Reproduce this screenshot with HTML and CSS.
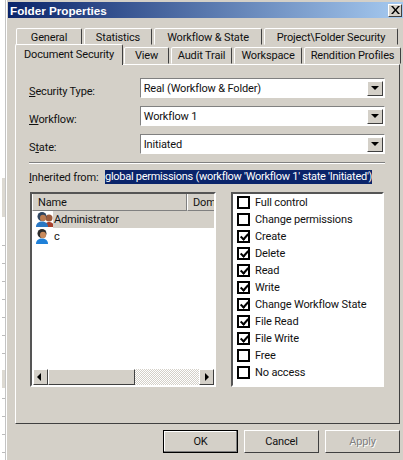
FILE: index.html
```html
<!DOCTYPE html>
<html lang="en">
<head>
  <meta charset="UTF-8">
  <title>Folder Properties</title>
  <link rel="stylesheet" href="styles.css">
</head>
<body>

  <div class="edge">
    <div class="edge-top"></div>
    <div class="edge-ticks"></div>
    <div class="edge-block"></div>
    <div class="edge-ticks short"></div>
  </div>

  <div class="dialog">
    <div class="titlebar">
      <span class="title">Folder Properties</span>
      <button class="close">
        <svg width="9" height="8" viewBox="0 0 9 8"><path d="M0 0h2l2.500 3L7 0h2L5.500 4 9 8H7L4.500 5 2 8H0l3.500-4z" fill="#000"/></svg>
      </button>
    </div>

    <div class="tabs tabs-back">
      <div class="tab t-general">General</div>
      <div class="tab t-stats">Statistics</div>
      <div class="tab t-workflow">Workflow &amp; State</div>
      <div class="tab t-project">Project\Folder Security</div>
    </div>
    <div class="tabs tabs-front">
      <div class="tab active">Document Security</div>
      <div class="tab t-view">View</div>
      <div class="tab t-audit">Audit Trail</div>
      <div class="tab t-space">Workspace</div>
      <div class="tab t-rend">Rendition Profiles</div>
    </div>

    <div class="panel">
      <div class="field">
        <label><u>S</u>ecurity Type:</label>
        <div class="combo"><span>Real (Workflow &amp; Folder)</span><i class="arrow"></i></div>
      </div>
      <div class="field">
        <label><u>W</u>orkflow:</label>
        <div class="combo"><span>Workflow 1</span><i class="arrow"></i></div>
      </div>
      <div class="field">
        <label>S<u>t</u>ate:</label>
        <div class="combo"><span>Initiated</span><i class="arrow"></i></div>
      </div>

      <div class="rule"></div>

      <div class="inherited">
        <label><u>I</u>nherited from:</label>
        <span class="selected">global permissions (workflow 'Workflow 1' state 'Initiated')</span>
      </div>

      <div class="lists">
        <div class="listbox users">
          <div class="header">
            <div class="col col-name">Name</div>
            <div class="col col-dom">Dom</div>
          </div>
          <div class="rows">
            <div class="row">
              <svg class="user" width="20" height="17" viewBox="0 0 20 17">
                <circle cx="14" cy="7" r="3.500" fill="#9a5a3c"/>
                <path d="M10 16c0-4 2-5 4-5s5 1 5 5z" fill="#a8402c"/>
                <circle cx="7" cy="5.500" r="4.500" fill="#2f4560"/>
                <ellipse cx="8" cy="7" rx="3" ry="3.200" fill="#b97a50"/>
                <path d="M1 16c0-4 3-5.500 6-5.500s6 1.500 6 5.500z" fill="#2a78c4"/>
              </svg>
              <span class="sel-name">Administrator</span>
            </div>
            <div class="row">
              <svg class="user" width="20" height="17" viewBox="0 0 20 17">
                <circle cx="7" cy="5.500" r="4.500" fill="#2c2c2c"/>
                <ellipse cx="8" cy="7" rx="3" ry="3.200" fill="#c98a5c"/>
                <path d="M1 16c0-4 3-5.500 6-5.500s6 1.500 6 5.500z" fill="#1f80d8"/>
              </svg>
              <span class="plain-name">c</span>
            </div>
          </div>
          <div class="scrollbar">
            <div class="sb-btn"><i class="sb-left"></i></div>
            <div class="sb-thumb"></div>
            <div class="sb-track"></div>
            <div class="sb-btn"><i class="sb-right"></i></div>
          </div>
        </div>

        <div class="listbox perms">
          <div class="perm"><i class="box"></i>Full control</div>
          <div class="perm"><i class="box"></i>Change permissions</div>
          <div class="perm"><i class="box checked"></i>Create</div>
          <div class="perm"><i class="box checked"></i>Delete</div>
          <div class="perm"><i class="box checked"></i>Read</div>
          <div class="perm"><i class="box checked"></i>Write</div>
          <div class="perm"><i class="box checked"></i>Change Workflow State</div>
          <div class="perm"><i class="box checked"></i>File Read</div>
          <div class="perm"><i class="box checked"></i>File Write</div>
          <div class="perm"><i class="box"></i>Free</div>
          <div class="perm"><i class="box"></i>No access</div>
        </div>
      </div>
    </div>

    <div class="actions">
      <button class="btn default">OK</button>
      <button class="btn">Cancel</button>
      <button class="btn disabled">Apply</button>
    </div>
  </div>

</body>
</html>
```

FILE: styles.css
```css
html, body {
  margin: 0;
  height: 100%;
  overflow: hidden;
}
body {
  display: flex;
  background: #fff;
  font-family: Roboto, "Liberation Sans", Arial, sans-serif;
  font-size: 11px;
  letter-spacing: -0.15px;
  color: #111;
}

/* leftovers of the window behind the dialog */
.edge {
  width: 5px;
  flex-shrink: 0;
  border-right: 1px solid #c4c4c4;
}
.edge-top {
  height: 39px;
  margin: 178px 0 28px 2px;
  background: #dcd9d2;
}
.edge-ticks {
  height: 125px;
  margin-left: 2px;
  background: repeating-linear-gradient(to bottom, #bbb 0 1px, #fff 1px 18px);
}
.edge-block {
  height: 18px;
  margin-left: 2px;
  background: #dcd9d2;
}
.edge-ticks.short {
  height: 70px;
  margin-top: 10px;
}

.dialog {
  margin-left: 1px;
  width: 396px;
  height: 460px;
  box-sizing: border-box;
  background: #d4d0c8;
  padding-top: 2px;
}
.titlebar {
  height: 16px;
  margin-left: 1px;
  display: flex;
  align-items: center;
  justify-content: space-between;
  padding: 0 1px 0 2px;
  background: linear-gradient(to right, #0a246a, #a6caf0);
}
.title {
  color: #fff;
  font-family: "Liberation Sans", Arial, sans-serif;
  font-weight: bold;
  font-size: 11.7px;
  letter-spacing: 0;
}
.close {
  width: 14px;
  height: 13px;
  padding: 0;
  display: flex;
  align-items: center;
  justify-content: center;
  background: #d4d0c8;
  border: 1px solid;
  border-color: #fff #404040 #404040 #fff;
}

/* tabs */
.tabs {
  display: flex;
  position: relative;
}
.tabs-back {
  margin-top: 10px;
  padding-left: 9px;
  gap: 2px;
}
.tabs-front {
  margin-top: -1px;
  padding-left: 8px;
  gap: 2px;
  z-index: 1;
}
.tab {
  height: 17px;
  line-height: 18px;
  box-sizing: border-box;
  text-align: center;
  background: #d4d0c8;
  border: 1px solid;
  border-color: #fff #404040 transparent #fff;
  border-radius: 2px 2px 0 0;
  white-space: nowrap;
}
.tabs-front .tab {
  margin-top: 3px;
  height: 17px;
  line-height: 16px;
}
.tabs-front .tab.active {
  margin-top: 0;
  height: 21px;
  width: 108px;
  margin-right: -1px;
  line-height: 19px;
  border-bottom: 0;
  position: relative;
  z-index: 2;
}
.t-general { width: 66px; }
.t-stats { width: 68px; }
.t-workflow { width: 108px; }
.t-project { width: 134px; }
.t-view { width: 45px; }
.t-audit { width: 61px; }
.t-space { width: 68px; }
.t-rend { width: 97px; }

.panel {
  width: 385px;
  height: 360px;
  margin-left: 8px;
  box-sizing: border-box;
  border: 1px solid;
  border-color: #fff #404040 #404040 #fff;
  padding: 13px 14px 0 13px;
  margin-top: -1px;
}

/* combos */
.field {
  display: flex;
  align-items: center;
  height: 20px;
  margin-bottom: 8px;
}
.field label {
  width: 111px;
  position: relative;
  top: 3px;
}
.combo {
  width: 246px;
  height: 20px;
  box-sizing: border-box;
  background: #fff;
  border: 1px solid;
  border-color: #808080 #fff #fff #808080;
  outline: 1px solid #d4d0c8;
  display: flex;
  align-items: center;
  justify-content: space-between;
  padding: 0 1px 0 3px;
}
.arrow {
  width: 16px;
  height: 15px;
  background: #d4d0c8;
  border: 1px solid;
  border-color: #fff #404040 #404040 #fff;
  box-sizing: border-box;
  position: relative;
}
.arrow::after, .sb-left, .sb-right {
  content: "";
  position: absolute;
  border-style: solid;
  border-color: transparent;
}
.arrow::after {
  left: 3px;
  top: 4px;
  border-width: 4px 4px 0;
  border-top-color: #000;
}

.rule {
  height: 0;
  border-top: 1px solid #808080;
  border-bottom: 1px solid #fff;
}
.inherited {
  display: flex;
  align-items: center;
  margin-top: 6px;
  height: 14px;
  white-space: nowrap;
}
.inherited label {
  width: 76px;
  flex-shrink: 0;
}
.selected {
  background: #0a246a;
  color: #fff;
  line-height: 14px;
  letter-spacing: -0.27px;
}

/* list boxes */
.lists {
  display: flex;
  justify-content: space-between;
  margin-top: 8px;
  padding: 0 1px;
}
.listbox {
  height: 195px;
  box-sizing: border-box;
  background: #fff;
  border: 2px solid;
  border-color: #555 #fff #fff #555;
}
.users {
  width: 186px;
  display: flex;
  flex-direction: column;
}
.perms {
  width: 153px;
}
.header {
  display: flex;
  height: 17px;
  background: #d4d0c8;
  overflow: hidden;
  flex-shrink: 0;
}
.col {
  box-sizing: border-box;
  line-height: 17px;
  padding-left: 5px;
  border-right: 1px solid #808080;
  border-bottom: 1px solid #808080;
  border-left: 1px solid #fff;
  white-space: nowrap;
  flex-shrink: 0;
}
.col-name { width: 155px; }
.col-dom { width: 27px; overflow: hidden; border-right: 0; }
.rows {
  flex: 1;
}
.row {
  height: 17px;
  display: flex;
  align-items: center;
  padding-left: 3px;
}
.user {
  flex-shrink: 0;
  margin-right: -2px;
}
.sel-name {
  flex: 1;
  align-self: stretch;
  line-height: 17px;
  background: #d4d0c8;
  padding-left: 1px;
}
.plain-name {
  padding-left: 1px;
}
.scrollbar {
  display: flex;
  height: 16px;
  flex-shrink: 0;
  margin-left: 1px;
}
.sb-btn, .sb-thumb {
  box-sizing: border-box;
  background: #d4d0c8;
  border: 1px solid;
  border-color: #fff #404040 #404040 #fff;
  position: relative;
}
.sb-btn {
  width: 15px;
}
.sb-thumb {
  width: 87px;
}
.sb-track {
  flex: 1;
  background: repeating-conic-gradient(#d4d0c8 0% 25%, #fff 0% 50%) 0 0 / 2px 2px;
}
.sb-left {
  left: 3px;
  top: 3px;
  border-width: 4px 4px 4px 0;
  border-right-color: #000;
}
.sb-right {
  left: 5px;
  top: 3px;
  border-width: 4px 0 4px 4px;
  border-left-color: #000;
}
.perm {
  display: flex;
  align-items: center;
  height: 17px;
  padding-left: 4px;
}
.box {
  width: 13px;
  height: 13px;
  box-sizing: border-box;
  border: 2px solid #000;
  margin-right: 5px;
  position: relative;
}
.box.checked::after {
  content: "";
  position: absolute;
  left: 3px;
  top: 0;
  width: 3px;
  height: 6px;
  border: solid #000;
  border-width: 0 2px 2px 0;
  transform: rotate(42deg);
}

/* bottom buttons */
.actions {
  display: flex;
  justify-content: flex-end;
  gap: 6px;
  margin-top: 6px;
  padding-right: 3px;
}
.btn {
  width: 75px;
  height: 23px;
  padding: 0;
  font: inherit;
  letter-spacing: inherit;
  color: #111;
  background: #d4d0c8;
  border: 1px solid;
  border-color: #fff #404040 #404040 #fff;
}
.btn.default {
  border: 1px solid #000;
  box-shadow: inset -1px -1px 0 #808080, inset 1px 1px 0 #fff;
}
.btn.disabled {
  color: #808080;
  text-shadow: 1px 1px 0 #fff;
}
```
